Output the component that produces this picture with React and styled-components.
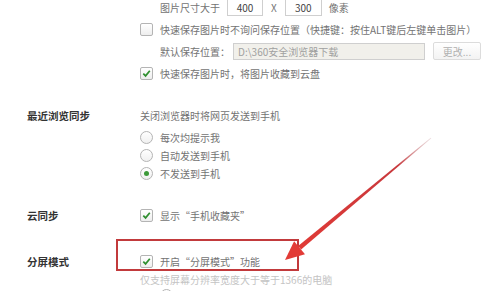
import React from "react";
import styled, { createGlobalStyle } from "styled-components";

const GlobalStyle = createGlobalStyle`
  html, body {
    margin: 0;
    padding: 0;
    background: #fff;
    overflow: hidden;
  }
  body {
    font-family: "Noto Sans CJK SC", "Noto Sans", sans-serif;
    font-size: 10px;
    color: #737373;
  }
`;

const Page = styled.div`
  position: relative;
  width: 496px;
  height: 291px;
  overflow: hidden;
`;

const Inner = styled.div`
  margin-top: -4px;
`;

const Section = styled.div`
  display: grid;
  grid-template-columns: 140px 1fr;
  margin-top: ${(p) => p.$gap || 0}px;
`;

const Label = styled.div`
  padding-left: 27px;
  padding-top: ${(p) => p.$top || 0}px;
  font-size: 10.5px;
  font-weight: 700;
  color: #333;
  line-height: 20px;
`;

const Body = styled.div`
  display: flex;
  flex-direction: column;
`;

const Row = styled.div`
  display: flex;
  align-items: center;
  height: ${(p) => p.$h || 18}px;
  padding-left: ${(p) => (p.$indent ? 20 : 0)}px;
  margin-top: ${(p) => p.$mt || 0}px;
  gap: ${(p) => (p.$gap !== undefined ? p.$gap : 7)}px;
  white-space: nowrap;
  color: ${(p) => (p.$faint ? "#c4c4c4" : "#737373")};
`;

const Box = styled.span`
  flex: none;
  width: 11px;
  height: 11px;
  border: 1px solid #b4b4b4;
  border-radius: 2px;
  background: linear-gradient(#ffffff, #eeeeee);
  display: flex;
  align-items: center;
  justify-content: center;
`;

const Radio = styled.span`
  flex: none;
  width: 11px;
  height: 11px;
  border: 1px solid #b4b4b4;
  border-radius: 50%;
  background: linear-gradient(#ffffff, #f0f0f0);
  display: flex;
  align-items: center;
  justify-content: center;
  &::after {
    content: "";
    width: 5px;
    height: 5px;
    border-radius: 50%;
    background: ${(p) => (p.$on ? "#3d9a3a" : "transparent")};
  }
`;

const Field = styled.span`
  display: inline-flex;
  align-items: center;
  justify-content: ${(p) => (p.$center ? "center" : "flex-start")};
  box-sizing: border-box;
  width: ${(p) => p.$w}px;
  height: ${(p) => p.$hh || 17}px;
  padding: 0 4px;
  border: 1px solid #cfcfcf;
  background: ${(p) => (p.$shade ? "#f1f0eb" : "#fff")};
  color: ${(p) => (p.$shade ? "#a0a0a0" : "#444")};
`;

const Button = styled.span`
  display: inline-flex;
  align-items: center;
  justify-content: center;
  box-sizing: border-box;
  width: 48px;
  height: 18px;
  margin-left: 5px;
  border: 1px solid #dcdcdc;
  border-radius: 2px;
  background: linear-gradient(#ffffff, #f3f3f3);
  color: #b0b0b0;
`;

const Sep = styled.span`
  margin: 0 1px;
  color: #777;
`;

const Highlight = styled.div`
  position: absolute;
  left: 116px;
  top: 239px;
  width: 183px;
  height: 32px;
  box-sizing: border-box;
  border: 2px solid #c23a3c;
  pointer-events: none;
`;

const Overlay = styled.svg`
  position: absolute;
  left: 0;
  top: 0;
  pointer-events: none;
`;

function Check({ on }) {
  return (
    <Box>
      {on && (
        <svg width="9" height="9" viewBox="0 0 9 9">
          <path d="M1.3 4.6 L3.6 6.9 L7.8 1.8" fill="none" stroke="#2f8f2f" strokeWidth="1.7" />
        </svg>
      )}
    </Box>
  );
}

function Arrow() {
  const tail = [431, 138];
  const tip = [285, 260];
  const dx = tip[0] - tail[0];
  const dy = tip[1] - tail[1];
  const len = Math.hypot(dx, dy);
  const u = [dx / len, dy / len];
  const n = [-u[1], u[0]];
  const base = [tip[0] - 19 * u[0], tip[1] - 19 * u[1]];
  const pt = (p, k) => `${(p[0] + k * n[0]).toFixed(1)},${(p[1] + k * n[1]).toFixed(1)}`;
  const shaft = [pt(tail, 0.4), pt(tail, -0.4), pt(base, -2.3), pt(base, 2.3)].join(" ");
  const head = [`${tip[0]},${tip[1]}`, pt(base, 8.5), pt(base, -8.5)].join(" ");
  return (
    <Overlay width="496" height="291" viewBox="0 0 496 291">
      <defs>
        <linearGradient id="shaftGrad" gradientUnits="userSpaceOnUse" x1={tail[0]} y1={tail[1]} x2={base[0]} y2={base[1]}>
          <stop offset="0" stopColor="#c9a0a4" stopOpacity="0.35" />
          <stop offset="0.25" stopColor="#c8383c" />
          <stop offset="1" stopColor="#e03a36" />
        </linearGradient>
      </defs>
      <polygon points={shaft} fill="url(#shaftGrad)" />
      <polygon points={head} fill="#e23b36" />
    </Overlay>
  );
}

export default function App() {
  return (
    <Page>
      <GlobalStyle />
      <Inner>
        <Section>
          <div />
          <Body>
            <Row $h={22} $indent>
              图片尺寸大于
              <Field $w={36} $center>400</Field>
              <Sep>X</Sep>
              <Field $w={37} $center>300</Field>
              像素
            </Row>
            <Row $h={22}>
              <Check />
              快速保存图片时不询问保存位置（快捷键：按住ALT键后左键单击图片）
            </Row>
            <Row $h={22} $indent $gap={3}>
              默认保存位置：
              <Field $w={192} $shade>D:\360安全浏览器下载</Field>
              <Button>更改...</Button>
            </Row>
            <Row $h={22}>
              <Check on />
              快速保存图片时，将图片收藏到云盘
            </Row>
          </Body>
        </Section>

        <Section $gap={22}>
          <Label>最近浏览同步</Label>
          <Body>
            <Row>关闭浏览器时将网页发送到手机</Row>
            <Row $mt={4}>
              <Radio />
              每次均提示我
            </Row>
            <Row>
              <Radio />
              自动发送到手机
            </Row>
            <Row>
              <Radio $on />
              不发送到手机
            </Row>
          </Body>
        </Section>

        <Section $gap={24}>
          <Label $top={-1}>云同步</Label>
          <Body>
            <Row>
              <Check on />
              显示“手机收藏夹”
            </Row>
          </Body>
        </Section>

        <Section $gap={26}>
          <Label $top={-1}>分屏模式</Label>
          <Body>
            <Row>
              <Check on />
              开启“分屏模式”功能
            </Row>
            <Row $faint>仅支持屏幕分辨率宽度大于等于1366的电脑</Row>
            <Row $indent $mt={-2}>
              <Radio />
            </Row>
          </Body>
        </Section>
      </Inner>
      <Highlight />
      <Arrow />
    </Page>
  );
}
